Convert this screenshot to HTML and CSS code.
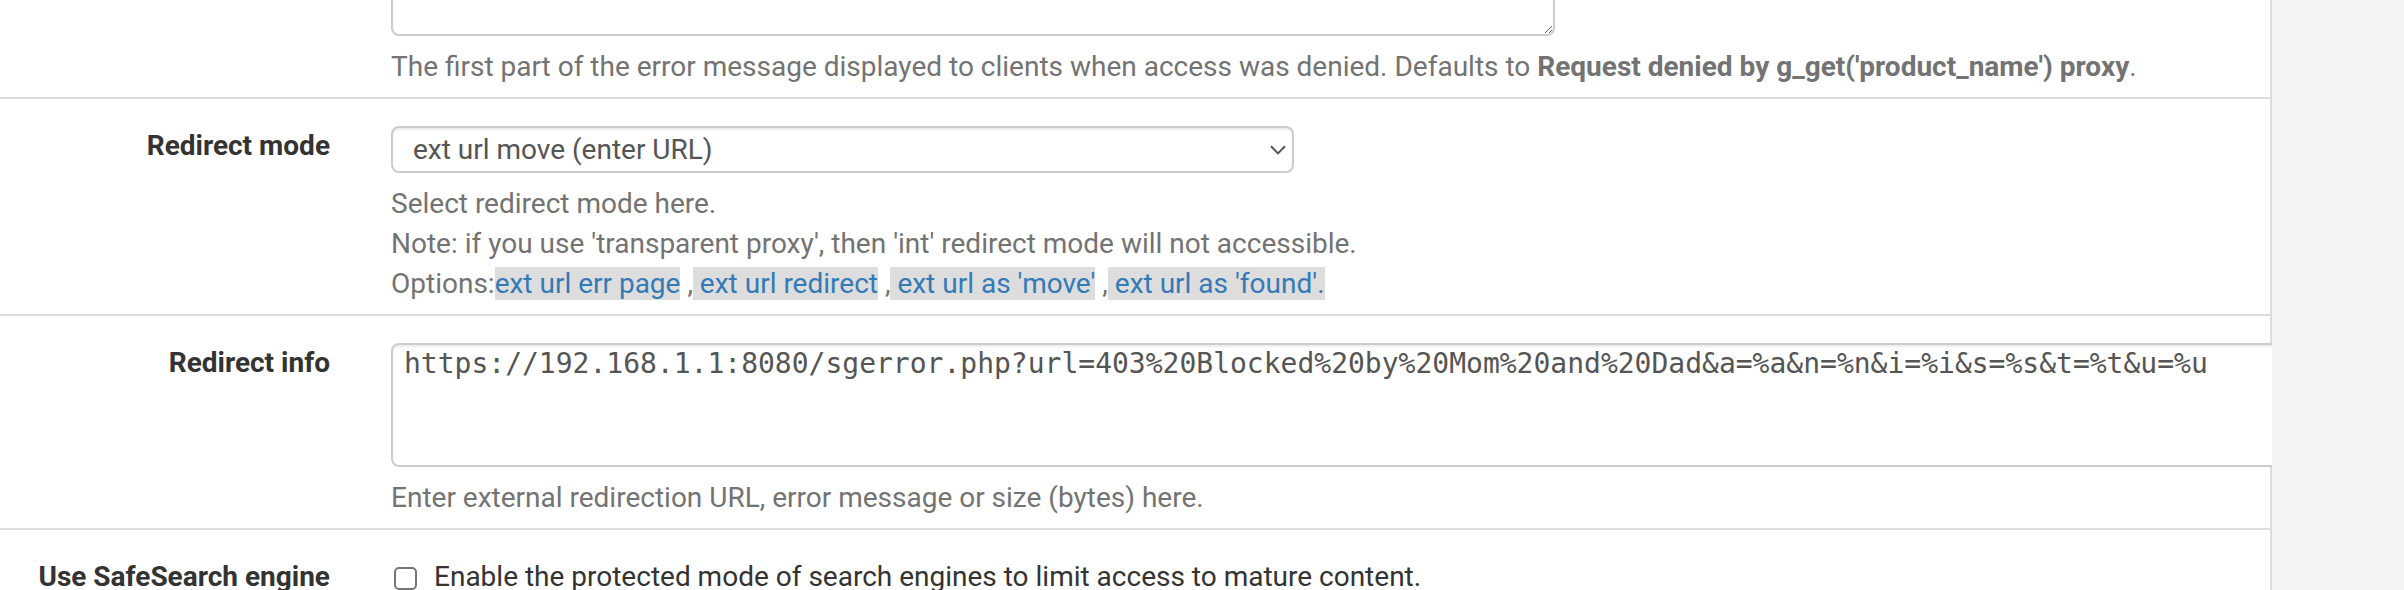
FILE: index.html
```html
<!DOCTYPE html>
<html lang="en">
<head>
    <meta charset="UTF-8">
    <title>Squid Guard - Common ACL</title>
    <link rel="stylesheet" href="styles.css">
</head>
<body>
    <div class="panel">
        <div class="form-group">
            <div class="control-label"></div>
            <div class="field">
                <textarea class="form-control deny-info" rows="3"></textarea>
                <span class="help-block">The first part of the error message displayed to clients when access was denied. Defaults to <b>Request denied by g_get('product_name') proxy</b>.</span>
            </div>
        </div>

        <div class="form-group">
            <label class="control-label" for="redirect_mode">Redirect mode</label>
            <div class="field">
                <div class="select-wrap">
                    <select class="form-control" id="redirect_mode">
                        <option>ext url move (enter URL)</option>
                    </select>
                    <svg class="chevron" width="16" height="10" viewBox="0 0 16 10">
                        <path d="M1 1.2 L8 8.4 L15 1.2" fill="none" stroke="#555" stroke-width="2"/>
                    </svg>
                </div>
                <span class="help-block">
                    Select redirect mode here.<br>
                    Note: if you use 'transparent proxy', then 'int' redirect mode will not accessible.<br>
                    Options:<a href="#">ext url err page</a> ,<a href="#"> ext url redirect</a> ,<a href="#"> ext url as 'move'</a> ,<a href="#"> ext url as 'found'.</a>
                </span>
            </div>
        </div>

        <div class="form-group">
            <label class="control-label" for="redirect">Redirect info</label>
            <div class="field">
                <textarea class="form-control redirect-info" id="redirect" rows="3">https://192.168.1.1:8080/sgerror.php?url=403%20Blocked%20by%20Mom%20and%20Dad&amp;a=%a&amp;n=%n&amp;i=%i&amp;s=%s&amp;t=%t&amp;u=%u</textarea>
                <span class="help-block">Enter external redirection URL, error message or size (bytes) here.</span>
            </div>
        </div>

        <div class="form-group">
            <label class="control-label" for="safesearch">Use SafeSearch engine</label>
            <div class="field">
                <label class="checkbox">
                    <input type="checkbox" id="safesearch">
                    Enable the protected mode of search engines to limit access to mature content.
                </label>
            </div>
        </div>
    </div>
</body>
</html>
```

FILE: styles.css
```css
body {
    margin: 0;
    background: #f4f4f4;
    font-family: Roboto, "Noto Sans", sans-serif;
    font-size: 28px;
    line-height: 40px;
    color: #333;
    overflow: hidden;
}
.panel {
    width: 2272px;
    margin-top: -113px;
    background: #fff;
    overflow: hidden;
}
.form-group {
    display: grid;
    grid-template-columns: 361px minmax(0, 1fr);
    border-top: 2px solid #ddd;
    border-right: 2px solid #ddd;
    padding-top: 27px;
}
.control-label {
    text-align: right;
    padding-right: 31px;
    font-weight: 700;
    color: #333;
}
.field {
    padding-left: 30px;
    min-width: 0;
}
.form-control {
    display: block;
    box-sizing: border-box;
    border: 2px solid #ccc;
    border-radius: 8px;
    background: #fff;
    color: #555;
    box-shadow: inset 0 2px 2px rgba(0,0,0,0.075);
    margin: 0;
}
.deny-info {
    width: 1164px;
    height: 120px;
}
.select-wrap {
    position: relative;
    width: 903px;
}
select.form-control {
    -webkit-appearance: none;
    appearance: none;
    width: 903px;
    height: 47px;
    padding: 0 20px;
    font-family: inherit;
    font-size: 28px;
}
.chevron {
    position: absolute;
    right: 8px;
    top: 19px;
}
.redirect-info {
    width: 2000px;
    height: 124px;
    padding: 2px 11px;
    font-family: "DejaVu Sans Mono", monospace;
    font-size: 28px;
    line-height: 1.2;
    resize: none;
    white-space: pre;
    overflow: hidden;
}
.help-block {
    display: block;
    margin: 11px 0 10px;
    color: #737373;
}
.help-block b {
    font-weight: 700;
}
.help-block a {
    color: #337ab7;
    text-decoration: none;
    background: #ddd;
}
.checkbox {
    display: flex;
    align-items: center;
    color: #333;
    padding-bottom: 40px;
}
.checkbox input {
    -webkit-appearance: none;
    appearance: none;
    box-sizing: border-box;
    width: 23px;
    height: 23px;
    margin: 2px 17px 0 3px;
    border: 2px solid #767676;
    border-radius: 5px;
    background: #fff;
}
```
